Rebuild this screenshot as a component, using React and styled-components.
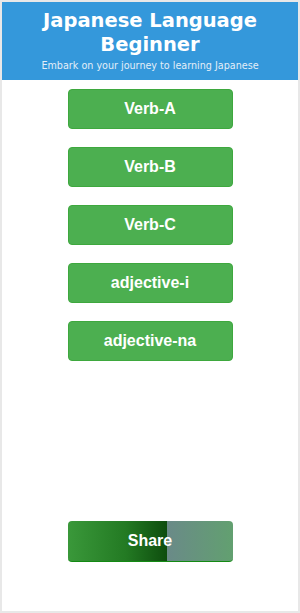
import React from "react";
import styled, { createGlobalStyle } from "styled-components";

const GlobalStyle = createGlobalStyle`
  html, body {
    margin: 0;
    padding: 0;
    background: #ffffff;
  }
  * {
    box-sizing: border-box;
  }
`;

const Page = styled.div`
  width: 300px;
  height: 613px;
  border: 2px solid #e8e8e8;
  background: #ffffff;
  display: flex;
  flex-direction: column;
`;

const Header = styled.header`
  background-color: #3498db;
  color: #ffffff;
  text-align: center;
  padding: 7px 10px 8px;
`;

const Title = styled.h1`
  margin: 0;
  font-family: "DejaVu Sans", Verdana, sans-serif;
  font-size: 19.5px;
  font-weight: bold;
  line-height: 24px;
`;

const Subtitle = styled.p`
  margin: 2px 0 0;
  font-family: "DejaVu Sans", Verdana, sans-serif;
  font-size: 9.6px;
  line-height: 13px;
  color: #e3eef8;
`;

const Content = styled.main`
  flex: 1;
  display: flex;
  flex-direction: column;
  align-items: center;
  gap: 18px;
  padding: 9px 0 49px;
`;

const LessonButton = styled.button`
  width: 165px;
  height: 40px;
  flex-shrink: 0;
  border: 1px solid #3ea83e;
  border-radius: 4px;
  background-color: #4caf50;
  color: #ffffff;
  font-family: "Liberation Sans", Arial, sans-serif;
  font-size: 16px;
  font-weight: bold;
  cursor: pointer;
`;

const ShareButton = styled(LessonButton)`
  margin-top: auto;
  height: 41px;
  border: none;
  border-bottom: 1px solid #138a13;
  background: linear-gradient(
    to right,
    #3a983a 0%,
    #237a23 35%,
    #0e4d0e 60%,
    #6a8a88 60%,
    #62a070 100%
  );
`;

const lessons = ["Verb-A", "Verb-B", "Verb-C", "adjective-i", "adjective-na"];

export default function App() {
  return (
    <>
      <GlobalStyle />
      <Page>
        <Header>
          <Title>Japanese Language Beginner</Title>
          <Subtitle>Embark on your journey to learning Japanese</Subtitle>
        </Header>
        <Content>
          {lessons.map((name) => (
            <LessonButton key={name}>{name}</LessonButton>
          ))}
          <ShareButton>Share</ShareButton>
        </Content>
      </Page>
    </>
  );
}
